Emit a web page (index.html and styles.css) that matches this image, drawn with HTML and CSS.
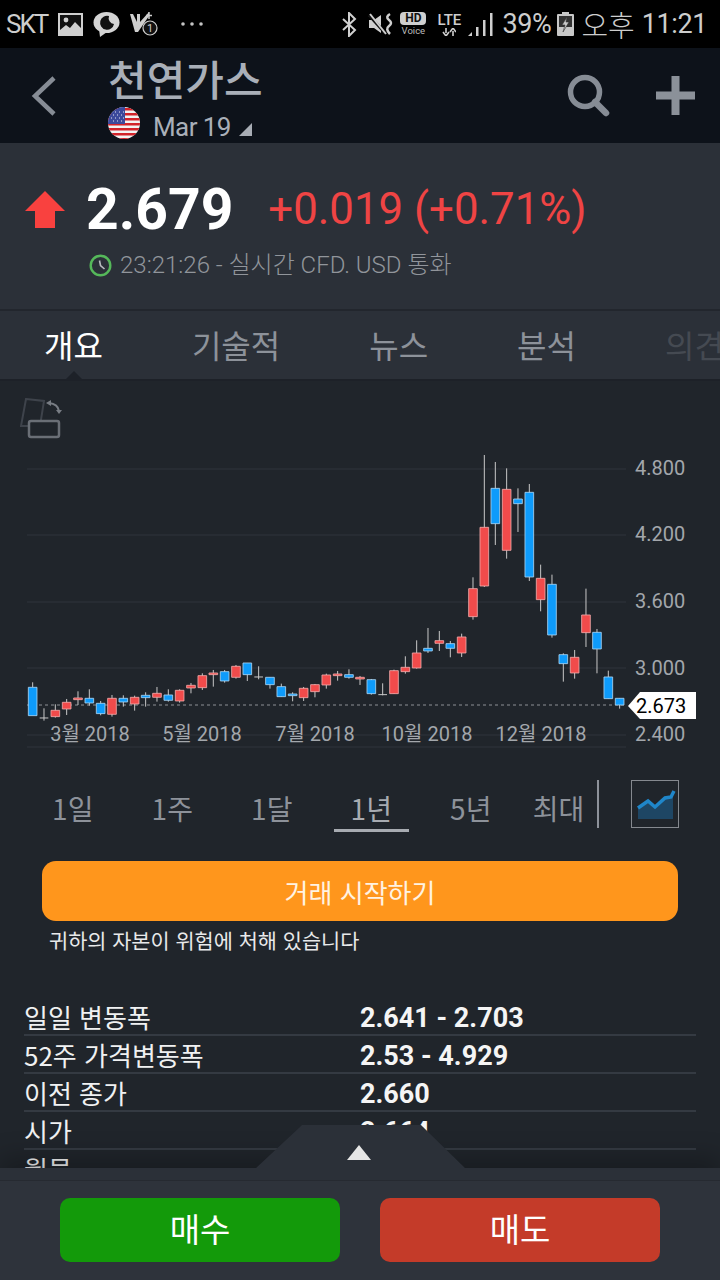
FILE: index.html
```html
<!DOCTYPE html>
<html lang="ko">
<head>
    <meta charset="UTF-8">
    <meta name="viewport" content="width=device-width, initial-scale=1.0">
    <title>천연가스</title>
    <link rel="stylesheet" href="styles.css">
</head>
<body>
    <!-- Status bar -->
    <div class="statusbar">
        <div class="status-left">
            <span class="carrier">SKT</span>
            <svg class="ic-picture" width="25" height="23" viewBox="0 0 25 23"><rect width="25" height="23" fill="#cfcfcf"/><rect x="2" y="2" width="21" height="19" fill="#111"/><circle cx="8" cy="7" r="2.4" fill="#cfcfcf"/><path d="M2 21V17L8 12L12 15L17 9L23 15V21Z" fill="#cfcfcf"/></svg>
            <svg class="ic-chat" width="27" height="25" viewBox="0 0 27 25"><ellipse cx="13.500" cy="10.500" rx="13" ry="10.500" fill="#d4d4d4"/><path d="M6 17L7 25L14 20Z" fill="#d4d4d4"/><path d="M16 4A7 7 0 1 0 21 12A6 6 0 0 1 16 4Z" fill="#111"/></svg>
            <svg class="ic-missed" width="30" height="26" viewBox="0 0 30 26"><path d="M1 3L4 3L8 11L8 3L11 3L11 11L20 1L20 5L9 21L6 21Z" fill="#cfcfcf"/><path d="M20 1V8M17 4.500H23" stroke="#cfcfcf" stroke-width="1.500"/><circle cx="21" cy="17" r="7" fill="#111" stroke="#cfcfcf" stroke-width="1.200"/><text x="21" y="21" class="ic-num">1</text></svg>
            <svg class="ic-dots" width="24" height="6" viewBox="0 0 24 6"><circle cx="3" cy="3" r="1.800" fill="#c4c4c4"/><circle cx="12" cy="3" r="1.800" fill="#c4c4c4"/><circle cx="21" cy="3" r="1.800" fill="#c4c4c4"/></svg>
        </div>
        <div class="status-right">
            <svg class="ic-bt" width="16" height="25" viewBox="0 0 16 25"><path d="M2 7L14 18L8 24V1L14 7L2 18" fill="none" stroke="#d0d0d0" stroke-width="2"/></svg>
            <svg class="ic-mute" width="26" height="24" viewBox="0 0 26 24"><path d="M1 8H6L13 3V21L6 16H1Z" fill="#cfcfcf"/><path d="M1 3L17 21" stroke="#111" stroke-width="3"/><path d="M2 2L18 22" stroke="#cfcfcf" stroke-width="2"/><path d="M22 2Q17 5 21 8Q25 11 21 14Q17 17 22 22" fill="none" stroke="#cfcfcf" stroke-width="2.500"/></svg>
            <div class="hd">
                <span class="hd-pill">HD</span>
                <span class="hd-voice">Voice</span>
            </div>
            <div class="lte">
                <span class="lte-text">LTE</span>
                <svg width="14" height="8" viewBox="0 0 14 8"><path d="M4 0V5M1 4L4 8L7 4" fill="none" stroke="#cfcfcf" stroke-width="1.600"/><path d="M11 8V3M8 4L11 0L14 4" fill="none" stroke="#cfcfcf" stroke-width="1.600"/></svg>
            </div>
            <svg class="ic-signal" width="25" height="24" viewBox="0 0 25 24"><path d="M0 24L4 20V24Z" fill="#cfcfcf"/><rect x="8" y="15" width="2.500" height="9" fill="#cfcfcf"/><rect x="15" y="8" width="2.500" height="16" fill="#cfcfcf"/><rect x="22" y="1" width="2.500" height="23" fill="#cfcfcf"/></svg>
            <span class="battery-pct">39%</span>
            <svg class="ic-battery" width="17" height="24" viewBox="0 0 17 24"><path d="M5 0H12V2H5Z" fill="#c8c8c8"/><rect y="2" width="17" height="22" rx="1" fill="#c8c8c8"/><rect x="2" y="4" width="13" height="11" fill="#333"/><path d="M10 5L5 13H8L6 20L12 10H9Z" fill="#c8c8c8" stroke="#333" stroke-width=".6"/></svg>
            <span class="clock-ampm">오후</span>
            <span class="clock-time">11:21</span>
        </div>
    </div>

    <!-- Title bar -->
    <header class="topbar">
        <svg class="back" width="26" height="40" viewBox="0 0 26 40"><path d="M23 2L4 20L23 38" fill="none" stroke="#868c95" stroke-width="4.500"/></svg>
        <div class="title-block">
            <h1>천연가스</h1>
            <div class="contract">
                <svg class="flag" width="32" height="32" viewBox="0 0 32 32">
                    <defs><clipPath id="flagclip"><circle cx="16" cy="16" r="16"/></clipPath></defs>
                    <g clip-path="url(#flagclip)">
                        <rect width="32" height="32" fill="#f2f2f2"/>
                        <path d="M0 1H32V3.500H0ZM0 6H32V8.500H0ZM0 11H32V13.500H0ZM0 16H32V18.500H0ZM0 21H32V23.500H0ZM0 26H32V28.500H0ZM0 31H32V33H0Z" fill="#d2232a"/>
                        <rect width="17" height="17" fill="#3c4a9c"/>
                        <path d="M3 5h1M7 5h1M11 5h1M15 5h1M5 8h1M9 8h1M13 8h1M3 11h1M7 11h1M11 11h1M15 11h1M5 14h1M9 14h1M13 14h1" stroke="#e6e6f2" stroke-width="1.200"/>
                    </g>
                </svg>
                <span class="contract-name">Mar 19</span>
                <svg class="contract-arrow" width="13" height="13" viewBox="0 0 13 13"><path d="M13 0V13H0Z" fill="#a8adb5"/></svg>
            </div>
        </div>
        <svg class="search" width="44" height="44" viewBox="0 0 44 44"><circle cx="18" cy="18" r="14.500" fill="none" stroke="#868c95" stroke-width="5.500"/><path d="M28 28L39 39" stroke="#868c95" stroke-width="6.500" stroke-linecap="round"/></svg>
        <svg class="plus" width="39" height="39" viewBox="0 0 39 39"><path d="M15.500 0H23.500V15.500H39V23.500H23.500V39H15.500V23.500H0V15.500H15.500Z" fill="#8b9199"/></svg>
    </header>

    <main class="content">
        <!-- Quote -->
        <section class="quote">
            <div class="price-row">
                <svg class="up-arrow" width="40" height="37" viewBox="0 0 40 37"><path d="M20 0L40 20H30V37H10V20H0Z" fill="#f9413f"/></svg>
                <span class="price">2.679</span>
                <span class="change">+0.019 (+0.71%)</span>
            </div>
            <div class="time-row">
                <svg width="23" height="23" viewBox="0 0 23 23"><circle cx="11.500" cy="11.500" r="9.800" fill="none" stroke="#55b85a" stroke-width="2.400"/><path d="M10.500 6.500L11.500 11.500L15.500 15" fill="none" stroke="#b9bcc0" stroke-width="1.600"/></svg>
                <span>23:21:26 - 실시간 CFD. USD 통화</span>
            </div>
        </section>

        <!-- Tabs -->
        <nav class="tabs">
            <span class="tab active">개요</span>
            <span class="tab">기술적</span>
            <span class="tab">뉴스</span>
            <span class="tab">분석</span>
            <span class="tab faded">의견</span>
            <i class="tab-notch"></i>
        </nav>

        <!-- Chart -->
        <section class="chart">
            <svg class="rotate-icon" width="44" height="44" viewBox="0 0 44 44">
                <path d="M6 1L24 3L20 28H1Z" fill="none" stroke="#3e434b" stroke-width="2"/>
                <rect x="9" y="23" width="30" height="16" rx="2" fill="#20252b" stroke="#6a6f76" stroke-width="2.500"/>
                <path d="M29 5Q38 6 39 13" fill="none" stroke="#787d84" stroke-width="2"/>
                <path d="M26 5L31 2V8ZM36 12H42L39 16Z" fill="#787d84"/>
            </svg>
            <svg class="chart-svg" width="720" height="369" viewBox="0 0 720 369">
                <path class="grid" d="M27 88H626M27 154H626M27 221H626M27 287H626M27 354H626M27 366H626"/>
                <path class="last-line" d="M27 324H626"/>
                <g transform="translate(0 59) scale(.3333)">
                    <path class="wick" d="M98 727V742M132 805V842M119 834H145M166 793V833M200 777V825M234 754V795M268 748V797M302 783V826M336 765V830M370 766V800M404 767V812M437 757V800M471 741V785M505 748V785M539 748V788M573 729V760M607 700V750M640 690V740M674 690V728M708 675V716M742 669V723M776 679V718M763 711H789M810 712V746M844 731V771M878 757V784M911 741V783M945 732V772M979 701V746M1013 693V722M1047 688V716"/>
                    <path class="body-blue" d="M85 742H111V827H85ZM255 775H281V789H255ZM289 790H315V821H289ZM357 775H383V786H357ZM424 766H450V773H424ZM492 765H518V781H492ZM661 695H687V723H661ZM729 669H755V704H729ZM797 712H823V734H797ZM831 740H857V770H831ZM865 762H891V767H865ZM1034 704H1060V712H1034Z"/>
                    <path class="body-red" d="M153 811H179V830H153ZM187 787H213V807H187ZM221 774H247V779H221ZM323 775H349V823H323ZM391 772H417V792H391ZM458 760H484V772H458ZM526 751H552V783H526ZM560 736H586V744H560ZM594 707H620V743H594ZM627 699H653V704H627ZM695 679H721V712H695ZM898 745H924V773H898ZM932 734H958V755H932ZM966 705H992V735H966ZM1000 702H1026V707H1000Z"/>
                </g>
                <g transform="translate(360 59) scale(.3333)">
                    <path class="wick" d="M0 708V735M34 717V764M68 730V766M55 764H81M102 689V762M136 649V701M170 601V686M204 564V639M238 573V633M271 603V652M305 581V651M339 412V539M373 45V441M406 66V315M440 85V356M474 145V276M508 132V423M542 374V514M576 404V593M610 640V725M644 630V716M678 446V621M711 567V700M745 692V776M779 775V806"/>
                    <path class="body-blue" d="M21 719H47V761H21ZM191 625H217V633H191ZM258 611H284V625H258ZM393 145H419V251H393ZM461 177H487V191H461ZM495 157H521V411H495ZM563 433H589V585H563ZM597 644H623V671H597ZM698 577H724V627H698ZM732 711H758V776H732ZM766 775H792V795H766Z"/>
                    <path class="body-red" d="M-13 712H13V717H-13ZM89 692H115V761H89ZM123 682H149V695H123ZM157 639H183V684H157ZM225 602H251V610H225ZM292 591H318V639H292ZM326 446H352V530H326ZM360 262H386V438H360ZM427 148H453V331H427ZM529 415H555V479H529ZM631 652H657V699H631ZM665 525H691V578H665Z"/>
                </g>
                <text class="axis" x="635" y="94">4.800</text>
                <text class="axis" x="635" y="160">4.200</text>
                <text class="axis" x="635" y="227">3.600</text>
                <text class="axis" x="635" y="294">3.000</text>
                <text class="axis" x="635" y="360">2.400</text>
                <text class="axis month" x="90" y="360">3월 2018</text>
                <text class="axis month" x="202" y="360">5월 2018</text>
                <text class="axis month" x="315" y="360">7월 2018</text>
                <text class="axis month" x="427" y="360">10월 2018</text>
                <text class="axis month" x="541" y="360">12월 2018</text>
                <path class="tag" d="M628 325L640 311H696V338H640Z"/>
                <text class="tag-text" x="636" y="332">2.673</text>
            </svg>
        </section>

        <!-- Range selector -->
        <div class="ranges">
            <div class="range"><span>1일</span></div>
            <div class="range"><span>1주</span></div>
            <div class="range"><span>1달</span></div>
            <div class="range current"><span>1년</span></div>
            <div class="range"><span>5년</span></div>
            <div class="range last"><span>최대</span></div>
            <i class="range-divider"></i>
            <div class="chart-type">
                <svg width="46" height="46" viewBox="0 0 46 46"><path d="M6 27L16 20L23 26L33 17L41 16L41 38H6Z" fill="#1e4664"/><path d="M6 27L16 20L23 26L33 17L39 16L42 10" fill="none" stroke="#1f86c9" stroke-width="3.500"/></svg>
            </div>
        </div>

        <button class="cta">거래 시작하기</button>
        <p class="risk">귀하의 자본이 위험에 처해 있습니다</p>

        <!-- Details -->
        <div class="details">
            <div class="row"><span class="label">일일 변동폭</span><span class="value">2.641 - 2.703</span></div>
            <div class="row"><span class="label">52주 가격변동폭</span><span class="value">2.53 - 4.929</span></div>
            <div class="row"><span class="label">이전 종가</span><span class="value">2.660</span></div>
            <div class="row"><span class="label">시가</span><span class="value">2.664</span></div>
            <div class="row"><span class="label">월물</span><span class="value"></span></div>
        </div>
    </main>

    <!-- Buy / sell -->
    <footer class="actions">
        <div class="handle"><i class="handle-arrow"></i></div>
        <button class="trade buy">매수</button>
        <button class="trade sell">매도</button>
    </footer>
</body>
</html>
```
FILE: styles.css
```css
/* General */
* {
    box-sizing: border-box;
}

body {
    margin: 0;
    width: 720px;
    height: 1280px;
    overflow: hidden;
    display: flex;
    flex-direction: column;
    background: #20252b;
    font-family: Roboto, "Noto Sans CJK KR", sans-serif;
}

svg {
    display: block;
    flex: none;
}

/* Status bar */
.statusbar {
    height: 48px;
    flex: none;
    background: #000;
    color: #cdcdcd;
    display: flex;
    justify-content: space-between;
    align-items: center;
    font-size: 27px;
}

.status-left,
.status-right {
    display: flex;
    align-items: center;
}

.status-left {
    padding-left: 6px;
}

.status-right {
    padding-right: 13px;
}

.carrier {
    font-size: 26px;
    letter-spacing: -2px;
    width: 52px;
}

.ic-chat {
    margin-left: 10px;
}

.ic-missed {
    margin-left: 9px;
}

.ic-num {
    font-size: 11px;
    fill: #cfcfcf;
    text-anchor: middle;
}

.ic-dots {
    margin-left: 21px;
}

.ic-mute {
    margin-left: 11px;
}

.hd {
    margin-left: 6px;
    width: 26px;
    display: flex;
    flex-direction: column;
    align-items: center;
}

.hd-pill {
    width: 26px;
    height: 13px;
    border-radius: 4px;
    background: #cfcfcf;
    color: #111;
    font-size: 12px;
    font-weight: 700;
    line-height: 13px;
    text-align: center;
}

.hd-voice {
    font-size: 9.500px;
    line-height: 12px;
    color: #bcbcbc;
}

.lte {
    margin-left: 9px;
    width: 28px;
    display: flex;
    flex-direction: column;
    align-items: center;
}

.lte-text {
    font-size: 15px;
    font-weight: 500;
    line-height: 15px;
}

.ic-signal {
    margin-left: 5px;
}

.battery-pct {
    margin-left: 9px;
    width: 47px;
    letter-spacing: -.3px;
}

.ic-battery {
    margin-left: 8px;
}

.clock-ampm {
    margin-left: 7px;
    font-family: "Noto Sans CJK KR", sans-serif;
    font-size: 29px;
    font-weight: 300;
}

.clock-time {
    margin-left: 7px;
    letter-spacing: -.4px;
}

/* Title bar */
.topbar {
    height: 95px;
    flex: none;
    background: #0d121a;
    display: flex;
    align-items: center;
    padding-left: 31px;
}

.title-block {
    margin-left: 51px;
    flex: 1;
}

h1 {
    margin: 0;
    height: 54px;
    font-family: "Noto Sans CJK KR", sans-serif;
    font-size: 42px;
    font-weight: 500;
    line-height: 54px;
    color: #a9afb8;
}

.contract {
    display: flex;
    align-items: center;
    height: 36px;
}

.contract-name {
    margin-left: 13px;
    padding-top: 8px;
    font-size: 26px;
    letter-spacing: -.6px;
    color: #a9afb8;
}

.contract-arrow {
    margin-left: 8px;
    margin-top: 14px;
}

.search {
    margin-right: 45px;
}

.plus {
    margin-right: 25px;
}

/* Quote */
.content {
    flex: 1;
    min-height: 0;
    overflow: hidden;
}

.quote {
    height: 168px;
    padding: 37px 0 0 25px;
    background: #2b3038;
    border-bottom: 2px solid #22262d;
}

.price-row {
    display: flex;
    align-items: center;
    height: 58px;
}

.price {
    margin-left: 21px;
    font-size: 57px;
    font-weight: 700;
    color: #fff;
}

.change {
    margin-left: 35px;
    font-size: 43.800px;
    color: #ef4444;
}

.time-row {
    display: flex;
    align-items: center;
    margin: 13px 0 0 64px;
    font-size: 24px;
    font-weight: 300;
    color: #91959b;
    gap: 8px;
    line-height: 28px;
}

/* Tabs */
.tabs {
    position: relative;
    height: 70px;
    padding-left: 44px;
    background: #2b3038;
    border-bottom: 2px solid #1d2128;
    display: flex;
    align-items: center;
    gap: 89px;
    white-space: nowrap;
    overflow: hidden;
}

.tab {
    font-family: "Noto Sans CJK KR", sans-serif;
    font-size: 32px;
    line-height: 60px;
    margin-bottom: 3px;
    color: #8d929a;
}

.tab.active {
    color: #fff;
}

.tab.faded {
    color: #454a52;
}

.tab-notch {
    position: absolute;
    left: 66px;
    bottom: 0;
    border-left: 8px solid transparent;
    border-right: 8px solid transparent;
    border-bottom: 8px solid #1d2128;
}

/* Chart */
.chart {
    position: relative;
    height: 369px;
}

.rotate-icon {
    position: absolute;
    left: 20px;
    top: 17px;
}

.grid {
    fill: none;
    stroke: #2f353c;
    stroke-width: 1;
}

.last-line {
    fill: none;
    stroke: #8d9196;
    stroke-width: 1;
    stroke-dasharray: 3 3;
}

.wick {
    fill: none;
    stroke: #c9c9c9;
    stroke-width: 3;
}

.body-blue {
    fill: #0e9bfb;
    stroke: #a9d4f2;
    stroke-width: 2.500;
}

.body-red {
    fill: #f14b4b;
    stroke: #f0a9a9;
    stroke-width: 2.500;
}

.axis {
    font-size: 20px;
    fill: #a3a7ac;
}

.month {
    text-anchor: middle;
}

.tag {
    fill: #fff;
}

.tag-text {
    font-size: 20px;
    fill: #000;
}

/* Range selector */
.ranges {
    display: flex;
    align-items: flex-start;
    margin-top: 30px;
    padding-left: 23px;
    height: 52px;
}

.range {
    width: 99.500px;
    text-align: center;
    font-family: "Noto Sans CJK KR", sans-serif;
    font-size: 28px;
    line-height: 56px;
    color: #8d929a;
}

.range span {
    display: inline-block;
    width: 75px;
    height: 52px;
}

.range.current {
    color: #a7abb1;
}

.range.current span {
    border-bottom: 3px solid #a7abb1;
}

.range.last {
    width: 76px;
}

.range-divider {
    width: 2px;
    height: 48px;
    background: #8d929a;
}

.chart-type {
    margin-left: 32px;
    width: 48px;
    height: 48px;
    border: 1px solid #85898f;
}

/* Call to action */
.cta {
    display: block;
    width: 636px;
    height: 60px;
    margin: 29px 0 0 42px;
    border: none;
    border-radius: 14px;
    background: #ff961c;
    color: #fff3e2;
    font-family: "Noto Sans CJK KR", sans-serif;
    font-size: 26px;
}

.risk {
    margin: 4px 0 0 49px;
    font-family: "Noto Sans CJK KR", sans-serif;
    font-size: 20.800px;
    line-height: 30px;
    color: #e8e9ea;
}

/* Details */
.details {
    margin: 43px 24px 0;
}

.row {
    display: grid;
    grid-template-columns: 336px 1fr;
    height: 38px;
    padding-top: 1px;
    border-bottom: 2px solid #343a42;
    align-items: center;
}

.label {
    font-family: "Noto Sans CJK KR", sans-serif;
    font-size: 26px;
    line-height: 35px;
    color: #f0f1f2;
}

.value {
    margin-top: 4px;
    font-size: 27px;
    font-weight: 700;
    line-height: 31px;
    color: #f5f5f5;
}

/* Buy / sell */
.actions {
    position: relative;
    flex: none;
    height: 112px;
    padding-top: 30px;
    background: linear-gradient(#2b3038 12px, #262a31 12px, #262a31 13px, #2e333b 13px);
    box-shadow: 0 -10px 24px rgba(0, 0, 0, .25);
    display: flex;
    justify-content: center;
    align-items: flex-start;
    gap: 40px;
}

.handle {
    position: absolute;
    left: 256px;
    bottom: 100%;
    width: 209px;
    height: 43px;
    background: #2b3038;
    clip-path: polygon(0 100%, 44px 2px, 46px 0, 165px 0, 167px 2px, 100% 100%);
}

.handle-arrow {
    position: absolute;
    left: 91px;
    top: 20px;
    border-left: 12.500px solid transparent;
    border-right: 12.500px solid transparent;
    border-bottom: 15px solid #e6e6e6;
}

.trade {
    width: 280px;
    height: 64px;
    padding: 0 0 5px;
    border: none;
    border-radius: 10px;
    color: #fff;
    font-family: "Noto Sans CJK KR", sans-serif;
    font-size: 33px;
}

.buy {
    background: #139a0a;
}

.sell {
    background: #c43b29;
}
```
